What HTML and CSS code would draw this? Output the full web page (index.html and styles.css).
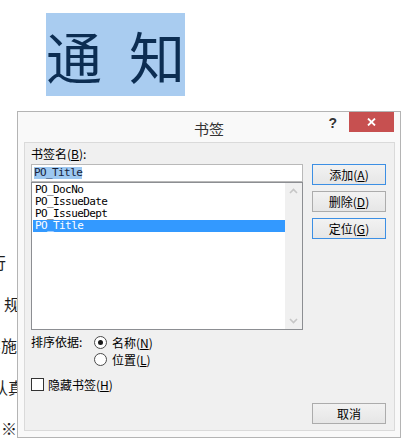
FILE: index.html
```html
<!DOCTYPE html>
<html lang="zh-CN">
<head>
<meta charset="utf-8">
<title>书签</title>
<link rel="stylesheet" href="styles.css">
</head>
<body>
<h1 class="doc-title"><span class="hl"><span>通</span> <span>知</span></span></h1>
<div class="doc-lines">
  <p class="line l1">行<span class="orange">“</span></p>
  <p class="line l2">规</p>
  <p class="line l3"><span class="blue">实</span>施</p>
  <p class="line l4">认真</p>
  <p class="line l5">※</p>
</div>

<div class="dialog">
  <div class="titlebar">
    <span class="title">书签</span>
    <div class="controls">
      <span class="help">?</span>
      <span class="close">
        <svg width="9" height="8" viewBox="0 0 9 8"><path d="M1 0.5 L8 7.5 M8 0.5 L1 7.5" stroke="#fff" stroke-width="1.8" fill="none"/></svg>
      </span>
    </div>
  </div>
  <div class="panel">
    <div class="label">书签名(<u>B</u>):</div>
    <div class="main-row">
      <div class="left-col">
        <div class="textbox"><span class="sel">PO_Title</span></div>
        <div class="listbox">
          <div class="items">
            <div class="item">PO_DocNo</div>
            <div class="item">PO_IssueDate</div>
            <div class="item">PO_IssueDept</div>
            <div class="item selected">PO_Title</div>
          </div>
          <div class="scrollbar">
            <svg width="17" height="17" viewBox="0 0 17 17"><path d="M5 10 L8.5 6.5 L12 10" stroke="#c6c6c6" stroke-width="1.6" fill="none"/></svg>
            <svg width="17" height="17" viewBox="0 0 17 17"><path d="M5 7 L8.5 10.5 L12 7" stroke="#c6c6c6" stroke-width="1.6" fill="none"/></svg>
          </div>
        </div>
      </div>
      <div class="right-col">
        <div class="btn default">添加(<u>A</u>)</div>
        <div class="btn">删除(<u>D</u>)</div>
        <div class="btn default">定位(<u>G</u>)</div>
      </div>
    </div>
    <div class="sort-row">
      <div class="sort-label">排序依据:</div>
      <div class="radios">
        <div class="radio-item"><span class="radio checked"></span><span>名称(<u>N</u>)</span></div>
        <div class="radio-item"><span class="radio"></span><span>位置(<u>L</u>)</span></div>
      </div>
    </div>
    <div class="check-row"><span class="checkbox"></span><span>隐藏书签(<u>H</u>)</span></div>
    <div class="footer"><div class="btn">取消</div></div>
  </div>
</div>
</body>
</html>
```
FILE: styles.css
```css
* { box-sizing: border-box; }
html, body { margin: 0; padding: 0; }
body {
  width: 420px;
  height: 446px;
  overflow: hidden;
  background: #fff;
  position: relative;
  font-family: "Noto Sans CJK SC", sans-serif;
}
.doc-title {
  margin: 0;
  padding: 13px 0 0 46px;
  height: 96px;
  font-weight: normal;
  font-size: 56px;
  line-height: 83px;
}
.hl {
  display: inline-flex;
  gap: 27px;
  height: 83px;
  background: #a9ccf0;
  color: #0c2d52;
}
.doc-lines { margin-top: 146px; }
.line {
  margin: 0;
  height: 41.5px;
  line-height: 41.5px;
  font-size: 16px;
  white-space: nowrap;
  color: #1e1e1e;
}
.l1 { margin-left: -10px; }
.l2 { margin-left: 4px; }
.l3 { margin-left: -15px; }
.l4 { margin-left: -8px; }
.l5 { margin-left: 1px; }
.orange { color: #e07b2a; margin-left: 2px; }
.blue { color: #2f7fd0; }

.dialog {
  position: absolute;
  left: 17px;
  top: 111px;
  width: 384px;
  height: 327px;
  border: 1px solid #b4b4b4;
  background: #f9f9f9;
  display: flex;
  flex-direction: column;
  font-size: 12px;
  color: #000;
}
.titlebar {
  height: 30px;
  display: grid;
  grid-template-columns: 1fr auto 1fr;
}
.title {
  grid-column: 2;
  font-size: 15px;
  line-height: 20px;
  padding-top: 7px;
  color: #333;
}
.controls {
  grid-column: 3;
  justify-self: end;
  display: flex;
  align-items: flex-start;
  margin-right: 6px;
}
.help {
  font-family: "Liberation Sans", sans-serif;
  font-weight: bold;
  font-size: 14px;
  line-height: 14px;
  margin-top: 4px;
  margin-right: 12px;
  color: #333;
}
.close {
  width: 45px;
  height: 20px;
  background: #c75050;
  display: flex;
  align-items: center;
  justify-content: center;
}
.panel {
  margin: 0 5px 0 6px;
  height: 289px;
  border: 1px solid #dadada;
  background: #f0f0f0;
  padding: 3px 8px 6px 6px;
  display: flex;
  flex-direction: column;
}
.label {
  height: 18px;
  line-height: 16px;
}
.main-row {
  display: flex;
  gap: 9px;
}
.left-col {
  width: 272px;
  display: flex;
  flex-direction: column;
}
.textbox {
  height: 18px;
  border: 1px solid #b9b9b9;
  background: #fff;
  padding: 2px 2px 0 2px;
  font-family: "DejaVu Sans Mono", monospace;
  font-size: 11px;
  letter-spacing: -0.6px;
  line-height: 12px;
}
.sel {
  display: inline-block;
  background: #9dc8f0;
  color: #15213a;
  height: 12px;
}
.listbox {
  height: 148px;
  border: 1px solid #8c8e92;
  background: #fff;
  display: flex;
  padding: 1px 0 0 1px;
}
.items {
  flex: 1;
  font-family: "DejaVu Sans Mono", monospace;
  font-size: 11px;
  letter-spacing: -0.6px;
  line-height: 12px;
}
.item {
  height: 12px;
  padding-left: 2px;
  color: #000;
}
.item.selected {
  background: #3399ff;
  color: #fff;
}
.scrollbar {
  width: 17px;
  margin-top: -1px;
  background: #f0f0f0;
  display: flex;
  flex-direction: column;
  justify-content: space-between;
}
.scrollbar svg { display: block; }
.right-col {
  width: 74px;
  display: flex;
  flex-direction: column;
  gap: 6px;
}
.btn {
  width: 74px;
  height: 21px;
  border: 1px solid #acacac;
  background: linear-gradient(#f2f2f2, #e6e6e6);
  text-align: center;
  line-height: 19px;
  font-size: 12px;
}
.btn.default { border-color: #3c8fe4; }
.sort-row {
  display: flex;
  margin-top: 4px;
}
.sort-label {
  width: 63px;
  line-height: 15px;
}
.radios {
  display: flex;
  flex-direction: column;
}
.radio-item, .check-row {
  height: 17px;
  display: flex;
  align-items: center;
}
.radio {
  width: 13px;
  height: 13px;
  border: 1px solid #4a4a4a;
  border-radius: 50%;
  background: #fff;
  margin-right: 5px;
  display: flex;
  align-items: center;
  justify-content: center;
}
.radio.checked::after {
  content: "";
  width: 5px;
  height: 5px;
  border-radius: 50%;
  background: #1a1a1a;
}
.check-row { margin-top: 8px; }
.checkbox {
  width: 13px;
  height: 13px;
  border: 1px solid #333;
  background: #fff;
  margin-right: 4px;
}
.footer {
  margin-top: auto;
  display: flex;
  justify-content: flex-end;
}
u { text-decoration: underline; text-underline-offset: 1px; }
```
